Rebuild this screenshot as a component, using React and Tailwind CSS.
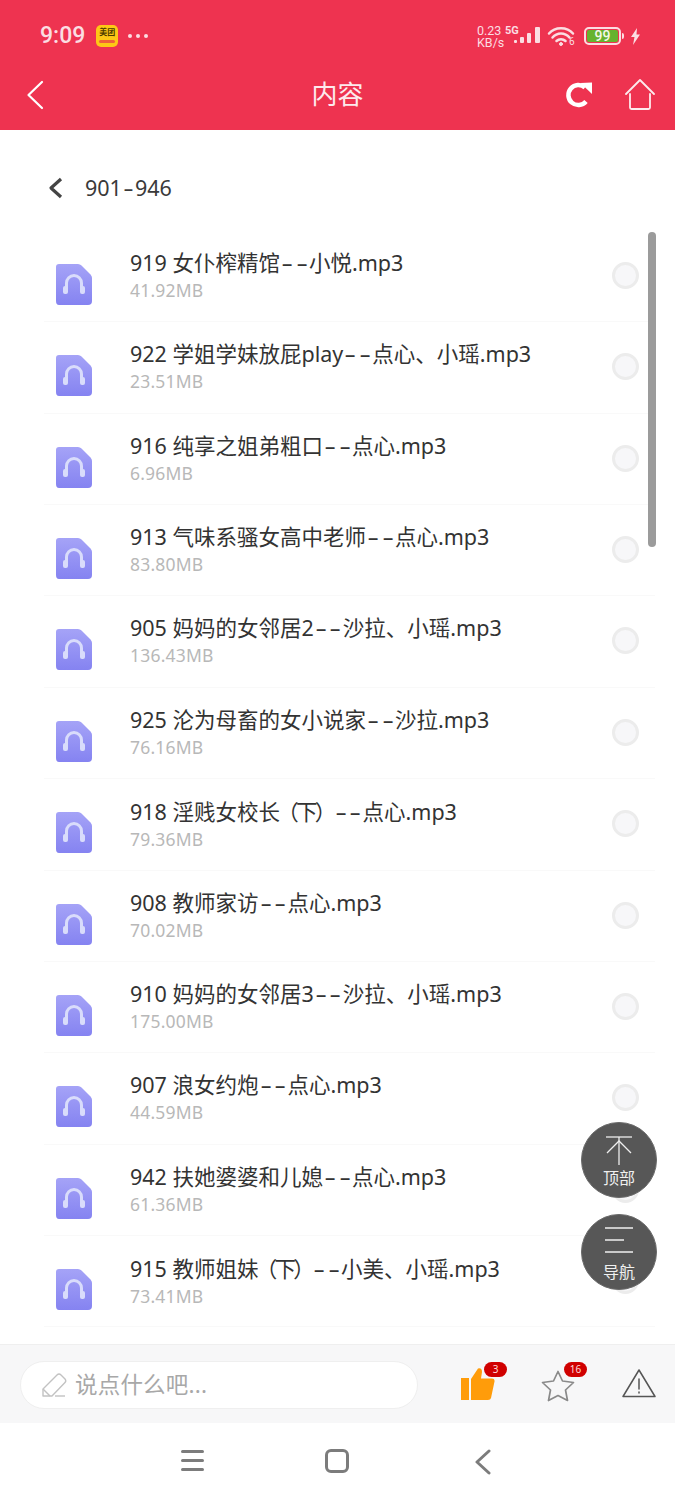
const FONT = { fontFamily: '"Noto Sans", "Noto Sans CJK SC", sans-serif' };

const rows = [
  ['919 女仆榨精馆--小悦.mp3', '41.92MB'],
  ['922 学姐学妹放屁play--点心、小瑶.mp3', '23.51MB'],
  ['916 纯享之姐弟粗口--点心.mp3', '6.96MB'],
  ['913 气味系骚女高中老师--点心.mp3', '83.80MB'],
  ['905 妈妈的女邻居2--沙拉、小瑶.mp3', '136.43MB'],
  ['925 沦为母畜的女小说家--沙拉.mp3', '76.16MB'],
  ['918 淫贱女校长（下）--点心.mp3', '79.36MB'],
  ['908 教师家访--点心.mp3', '70.02MB'],
  ['910 妈妈的女邻居3--沙拉、小瑶.mp3', '175.00MB'],
  ['907 浪女约炮--点心.mp3', '44.59MB'],
  ['942 扶她婆婆和儿媳--点心.mp3', '61.36MB'],
  ['915 教师姐妹（下）--小美、小瑶.mp3', '73.41MB'],
];

function Title({ text }) {
  const parts = text.split(/(-|（|）)/);
  return (
    <>
      {parts.map((p, i) =>
        p === '-' ? (
          <span key={i} className="inline-block w-[14.5px] text-center scale-x-[1.7]">-</span>
        ) : p === '（' || p === '）' ? (
          <span key={i} className="inline-flex w-[16px] justify-center font-['Noto_Sans_CJK_TC']">{p}</span>
        ) : (
          <span key={i}>{p}</span>
        )
      )}
    </>
  );
}

function FileIcon() {
  return (
    <svg width="38" height="44" viewBox="0 0 38 44" className="mt-[32px] shrink-0">
      <defs>
        <linearGradient id="fg" x1="0" y1="0" x2="0" y2="1">
          <stop offset="0" stopColor="#a5a3f7" />
          <stop offset="1" stopColor="#8583f1" />
        </linearGradient>
      </defs>
      <path d="M4 1H23Q25 1 26.500 2.500L35.500 11.500Q37 13 37 15V38Q37 42 33 42H4Q1 42 1 38V4Q1 1 4 1Z" fill="url(#fg)" />
      <path d="M11.500 28V20a7.500 7.500 0 0 1 15 0V28" fill="none" stroke="#d9dcfb" strokeWidth="3" />
      <rect x="8" y="23" width="5" height="8" rx="2" fill="#d9dcfb" />
      <rect x="25" y="23" width="5" height="8" rx="2" fill="#d9dcfb" />
    </svg>
  );
}

function Row({ title, size }) {
  return (
    <div className="h-[91.36px] shrink-0 flex items-start pl-[55px] pr-[36px] relative">
      <FileIcon />
      <div className="ml-[37px] flex-1 min-w-0 pt-[17px]">
        <div className="text-[21.500px] leading-[30px] text-[#333333] whitespace-nowrap"><Title text={title} /></div>
        <div className="text-[17.500px] leading-[24px] tracking-[0.2px] text-[#b8b8b8]">{size}</div>
      </div>
      <div className="mt-[31px] w-[27px] h-[27px] rounded-full bg-[#f7f7f9] border-[3px] border-[#ececec] shrink-0" />
      <div className="absolute left-[44px] right-[20px] bottom-0 h-px bg-[#f9f9f9]" />
    </div>
  );
}

function StatusBar() {
  return (
    <div className="h-[72px] flex items-start pl-[40px] pr-[34px] pt-[23px] text-[#fbdde2]">
      <span className="text-[23px] leading-[26px] font-medium" style={{ fontFamily: 'Roboto, sans-serif' }}>9:09</span>
      <div className="ml-[11px] mt-[2px] w-[22px] h-[22px] rounded-[5px] bg-[#fdc816] flex flex-col items-center overflow-hidden">
        <span className="text-[8px] leading-[14px] font-bold text-[#4a3a00]">美团</span>
        <div className="mt-[1px] w-[16px] h-[3px] bg-[#f0603a] rounded-sm" />
      </div>
      <div className="ml-[10px] mt-[11px] flex gap-[4px]">
        <div className="w-[4px] h-[4px] rounded-full bg-[#fbdde2]" />
        <div className="w-[4px] h-[4px] rounded-full bg-[#fbdde2]" />
        <div className="w-[4px] h-[4px] rounded-full bg-[#fbdde2]" />
      </div>
      <div className="flex-1" />
      <div className="flex flex-col text-[12.500px] leading-[12px] mt-[2px] w-[28px] whitespace-nowrap" style={{ fontFamily: 'Roboto, sans-serif' }}>
        <span>0.23</span>
        <span>KB/s</span>
      </div>
      <span className="mt-[2px] text-[11px] leading-[11px] font-bold w-[10px]" style={{ fontFamily: 'Roboto, sans-serif' }}>5G</span>
      <svg width="28" height="18" viewBox="0 0 28 18" className="mt-[3px] ml-[-1px]" fill="#fbdde2">
        <rect x="0" y="14" width="3" height="3" rx="1" />
        <rect x="6" y="11" width="4" height="6" rx="1" />
        <rect x="13" y="7" width="4" height="10" rx="1" />
        <rect x="21" y="1" width="5" height="16" rx="1" />
      </svg>
      <svg width="28" height="22" viewBox="0 0 28 22" className="ml-[5px] mt-[3px]" fill="none" stroke="#fbdde2" strokeLinecap="round">
        <path d="M2 7.500C8 0.500 20 0.500 26 7.500" strokeWidth="2.500" />
        <path d="M5.500 11.500C10 6 18 6 22.500 11.500" strokeWidth="2.500" />
        <path d="M9.500 15C12 12.500 16 12.500 18.500 15" strokeWidth="2.500" />
        <circle cx="14" cy="18" r="1.500" fill="#fbdde2" />
      </svg>
      <span className="text-[10px] leading-[10px] mt-[14px] ml-[-6px] w-[8px]" style={{ fontFamily: 'Roboto, sans-serif' }}>6</span>
      <div className="ml-[7px] mt-[4px] w-[37px] h-[18px] rounded-[5px] border-2 border-[#fbdde2] p-[1px]">
        <div className="w-full h-full bg-[#66b32e] rounded-[2px] text-[14px] leading-[12px] text-center text-[#f3f8e8] font-medium" style={{ fontFamily: 'Roboto, sans-serif' }}>99</div>
      </div>
      <div className="w-[2px] h-[6px] mt-[10px] ml-[1px] bg-[#fbdde2] rounded-r" />
      <svg width="11" height="17" viewBox="0 0 11 17" className="ml-[6px] mt-[5px]" fill="#fbdde2">
        <path d="M7 0L1 9H4.500L3 17L10 6.500H6.500Z" />
      </svg>
    </div>
  );
}

function NavBar() {
  return (
    <div className="h-[58px] flex items-start px-[26px] text-white">
      <div className="flex-1">
        <svg width="18" height="30" viewBox="0 0 18 30" fill="none" stroke="#fff" strokeWidth="2.200" strokeLinecap="round" strokeLinejoin="round" className="mt-[8px]">
          <path d="M16 2L2.500 15L16 28" />
        </svg>
      </div>
      <div className="text-center text-[26px] leading-[44px] text-[#fdeaed]">内容</div>
      <div className="flex-1 flex justify-end">
        <svg width="28" height="28" viewBox="0 0 28 28" className="mt-[9px]" fill="none">
          <path d="M21 20.500A10 10 0 1 1 20 6.500" stroke="#fff" strokeWidth="4.500" />
          <path d="M15.500 2L27 1.500V13Z" fill="#fff" />
        </svg>
        <svg width="30" height="32" viewBox="0 0 30 32" className="ml-[32px] mr-[-6px] mt-[7px]" fill="none" stroke="#fdeaed" strokeWidth="1.800" strokeLinejoin="round" strokeLinecap="round">
          <path d="M1 15L15 1L29 15" />
          <path d="M5 15V28.500Q5 30 6.500 30H23.500Q25 30 25 28.500V15" />
        </svg>
      </div>
    </div>
  );
}

function BottomBar() {
  return (
    <div className="h-[79px] bg-[#f7f7f8] border-t border-[#efefef] flex items-start pl-[20px] shrink-0">
      <div className="mt-[16px] w-[398px] h-[48px] bg-white rounded-full border border-[#efefef] flex items-center pl-[20px]">
        <svg width="26" height="26" viewBox="0 0 26 26" fill="none" stroke="#c2c2c2" strokeWidth="1.400" strokeLinejoin="round">
          <path d="M2 24V17L16 3Q18 1 20 3L24 7Q25.500 9 24 10.500L11 24Z" />
          <path d="M2 17L9 24" />
          <path d="M14 24H24" />
        </svg>
        <span className="ml-[8px] text-[22.500px] leading-[30px] tracking-[0.2px] text-[#a8a8a8]">说点什么吧...</span>
      </div>
      <div className="relative ml-[43px] mt-[23px] w-[34px] h-[36px]">
        <svg width="34" height="34" viewBox="0 0 34 34" fill="#ff9c0a">
          <rect x="0" y="10" width="8" height="22" />
          <path d="M10 11L17 0.500Q21 -0.500 21 4L20 10.500H31Q34 10.500 33.500 13.500L30 30Q29.500 32 27 32H10Z" />
        </svg>
        <div className="absolute left-[23px] top-[-6px] h-[15px] w-[23px] rounded-full bg-[#d00000] text-[#ffd9d9] text-[10px] leading-[15px] text-center">3</div>
      </div>
      <div className="relative ml-[46px] mt-[25px] w-[34px] h-[34px]">
        <svg width="34" height="32" viewBox="0 0 34 32" fill="none" stroke="#8a8a8a" strokeWidth="1.700" strokeLinejoin="round">
          <path d="M17 1.500L21.500 11L32.500 12.500L24.500 20L26.500 30.500L17 25.500L7.500 30.500L9.500 20L1.500 12.500L12.500 11Z" />
        </svg>
        <div className="absolute left-[23px] top-[-8px] h-[15px] w-[23px] rounded-full bg-[#d00000] text-[#ffd9d9] text-[10px] leading-[15px] text-center">16</div>
      </div>
      <svg width="34" height="30" viewBox="0 0 34 30" className="ml-[47px] mt-[23px]" fill="none" stroke="#555" strokeWidth="1.500" strokeLinejoin="round" strokeLinecap="round">
        <path d="M17 2L33 28.500H1Z" />
        <path d="M17 11V21" />
        <path d="M17 24V25" />
      </svg>
    </div>
  );
}

function SystemNav() {
  return (
    <div className="h-[77px] bg-white shrink-0 flex items-start pl-[181px] pt-[26px]">
      <div className="w-[23px] flex flex-col gap-[6px] mt-[1px]">
        <div className="h-[3px] bg-[#7c7c7c] rounded" />
        <div className="h-[3px] bg-[#7c7c7c] rounded" />
        <div className="h-[3px] bg-[#7c7c7c] rounded" />
      </div>
      <div className="ml-[121px] w-[24px] h-[24px] rounded-[6px] border-[3px] border-[#7c7c7c]" />
      <svg width="18" height="26" viewBox="0 0 18 26" className="ml-[125px]" fill="none" stroke="#7c7c7c" strokeWidth="3" strokeLinecap="round" strokeLinejoin="round">
        <path d="M15 2L3 13L15 24" />
      </svg>
    </div>
  );
}

export default function App() {
  return (
    <div className="relative w-[675px] h-[1500px] bg-white flex flex-col overflow-hidden" style={FONT}>
      <div className="h-[130px] bg-[#ee3350] shrink-0">
        <StatusBar />
        <NavBar />
      </div>
      <div className="h-[101px] shrink-0 flex items-start pl-[48px] pt-[43px]">
        <svg width="15" height="22" viewBox="0 0 15 22" fill="none" stroke="#444" strokeWidth="3.200" strokeLinejoin="round" className="mt-[4px]">
          <path d="M13 2L3 11L13 20" />
        </svg>
        <span className="ml-[22px] text-[21.500px] leading-[30px] text-[#3a3a3a]">901<span className="inline-block w-[13px] text-center scale-x-[1.5]">-</span>946</span>
      </div>
      <div className="flex-1 min-h-0 overflow-hidden flex flex-col">
        {rows.map(([t, s]) => <Row key={t} title={t} size={s} />)}
      </div>
      <BottomBar />
      <SystemNav />
      <div className="absolute left-[648px] top-[232px] w-[8px] h-[315px] rounded-full bg-[#9b9b9b]" />
      <div className="absolute left-[581px] top-[1122px] flex flex-col gap-[16px]">
        <div className="w-[76px] h-[76px] rounded-full bg-[#575757] flex flex-col items-center text-[#f0f0f0] border border-[#6a6a6a]">
          <svg width="28" height="30" viewBox="0 0 28 30" className="mt-[13px]" fill="none" stroke="#efefef" strokeWidth="1.300">
            <path d="M1 1H27" />
            <path d="M14 1V29" />
            <path d="M2 17L14 5L26 17" />
          </svg>
          <span className="mt-[2px] text-[16px] leading-[20px]">顶部</span>
        </div>
        <div className="w-[76px] h-[76px] rounded-full bg-[#575757] flex flex-col items-center text-[#f0f0f0] border border-[#6a6a6a]">
          <svg width="30" height="28" viewBox="0 0 30 28" className="mt-[11px]" fill="none" stroke="#efefef" strokeWidth="1.500">
            <path d="M1 2H29" />
            <path d="M1 14H20" />
            <path d="M1 26H29" />
          </svg>
          <span className="mt-[8px] text-[16px] leading-[20px]">导航</span>
        </div>
      </div>
    </div>
  );
}
